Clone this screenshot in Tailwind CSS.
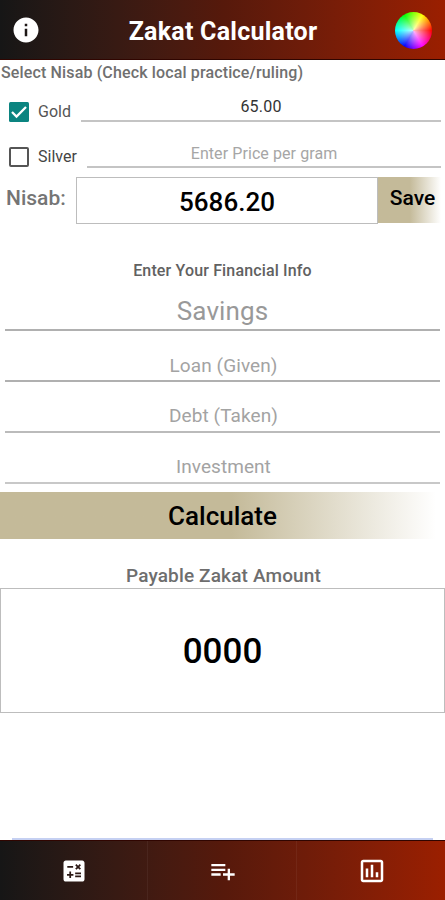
<!DOCTYPE html>
<html lang="en">

<head>
    <meta charset="UTF-8">
    <meta name="viewport" content="width=device-width, initial-scale=1.0">
    <title>Zakat Calculator</title>
    <script src="https://cdn.jsdelivr.net/npm/@tailwindcss/browser@4"></script>
</head>

<body class="bg-white font-[Roboto,sans-serif]">
    <div class="flex flex-col w-[445px] h-[900px] overflow-hidden">

        <!-- header -->
        <header class="flex items-center justify-between h-[60px] shrink-0 pl-[11px] pr-[13px] border-b border-[#300500] bg-linear-to-r from-[#161616] via-[#56190b] to-[#9b1f00]">
            <svg class="size-[30px]" viewBox="0 0 24 24" fill="white">
                <path d="M12 2C6.480 2 2 6.480 2 12s4.480 10 10 10 10-4.480 10-10S17.520 2 12 2zm1 15h-2v-6h2v6zm0-8h-2V7h2v2z" />
            </svg>
            <h1 class="pt-1 pl-2.5 text-white font-bold text-[25px] leading-8 tracking-[0.24px]">Zakat Calculator</h1>
            <div class="size-[37px] mt-0.5 rounded-full bg-[radial-gradient(circle,rgba(255,255,255,0.75)_0%,rgba(255,255,255,0)_70%),conic-gradient(from_90deg,#ff0000,#ff00ff,#0000ff,#00ffff,#00ff00,#ffff00,#ff0000)]"></div>
        </header>

        <main class="flex flex-col grow">
            <p class="h-[25px] pl-px pt-px text-base leading-6 tracking-[0.14px] font-medium text-[#707070]">Select Nisab (Check local practice/ruling)</p>

            <div class="flex h-[37px] pl-2 pr-1">
                <label class="flex items-center pt-4 gap-2 w-[73px] text-base text-[#555555]">
                    <svg class="size-[22px] shrink-0" viewBox="0 0 22 22">
                        <rect x="1" y="1" width="20" height="20" rx="1.500" fill="#0b8480" />
                        <path d="M4 11l4.500 4.500L18 6" fill="none" stroke="white" stroke-width="2.300" />
                    </svg>
                    Gold
                </label>
                <div class="grow border-b-2 border-[#c4c4c4] pt-2.5 text-center text-base leading-6 tracking-[0.2px] text-[#333333]">65.00</div>
            </div>

            <div class="flex h-[46px] pl-2 pr-1">
                <label class="flex items-center pt-6 gap-2 w-[79px] text-base text-[#444444]">
                    <svg class="size-[22px] shrink-0" viewBox="0 0 22 22">
                        <rect x="2" y="2" width="18" height="18" rx="1" fill="none" stroke="#555555" stroke-width="2" />
                    </svg>
                    Silver
                </label>
                <div class="grow border-b-2 border-[#c4c4c4] pt-5 text-center text-base leading-6 tracking-[0.08px] text-[#a6a6a6]">Enter Price per gram</div>
            </div>

            <div class="flex h-[57px] pt-[9px] pr-1">
                <span class="w-[76px] pl-1.5 pt-[5px] text-[21px] leading-8 font-medium text-[#757575]">Nisab:</span>
                <div class="w-[302px] h-[47px] border border-[#bdbdbd] text-center text-[26px] leading-[48px] font-medium text-black">5686.20</div>
                <button class="w-[63px] h-[46px] pl-1.5 pb-0.5 text-[21px] font-medium text-black bg-linear-to-r from-[#c4ba99] from-50% to-white">Save</button>
            </div>

            <p class="mt-[34px] h-6 text-center text-base leading-6 tracking-[0.15px] font-medium text-[#616161]">Enter Your Financial Info</p>

            <div class="mx-[5px]">
                <div class="h-[48px] border-b-2 border-[#b0b0b0] pt-3 text-center text-[26px] leading-8 tracking-[0.1px] text-[#999999]">Savings</div>
                <div class="h-[51px] border-b-2 border-[#b0b0b0] pt-[21px] pl-0.5 text-center text-[19px] leading-7 tracking-[0.1px] text-[#a3a3a3]">Loan (Given)</div>
                <div class="h-[51px] border-b-2 border-[#bbbbbb] pt-5 pl-0.5 text-center text-[19px] leading-7 tracking-[0.1px] text-[#a3a3a3]">Debt (Taken)</div>
                <div class="h-[51px] border-b-2 border-[#c8c8c8] pt-5 pl-0.5 text-center text-[19px] leading-7 tracking-[0.05px] text-[#a3a3a3]">Investment</div>
            </div>

            <button class="mt-2 h-[47px] pt-0.5 text-[26px] font-medium text-black bg-linear-to-r from-[#c4ba99] from-52% to-white to-98%">Calculate</button>

            <p class="mt-6 h-[25px] pl-0.5 text-center text-[19px] leading-[26px] tracking-[0.15px] font-medium text-[#6e6e6e]">Payable Zakat Amount</p>
            <div class="h-[125px] border border-[#bdbdbd] text-center text-[35px] leading-[126px] font-medium text-black">0000</div>
        </main>

        <!-- bottom tabs -->
        <div class="mx-3 h-0.5 shrink-0 bg-[#c5d0f2]"></div>
        <nav class="grid grid-cols-3 h-[60px] shrink-0 border-t border-[#300500] bg-linear-to-r from-[#161616] via-[#56190b] to-[#9b1f00]">
            <a class="flex items-center justify-center border-r border-white/5">
                <svg class="size-[28px]" viewBox="0 0 24 24" fill="white">
                    <path d="M19 3H5c-1.100 0-2 .9-2 2v14c0 1.100.9 2 2 2h14c1.100 0 2-.9 2-2V5c0-1.100-.9-2-2-2zm-5.970 4.060L14.090 6l1.410 1.410L16.910 6l1.060 1.060-1.410 1.410 1.410 1.410-1.060 1.060-1.410-1.400-1.410 1.410-1.060-1.060 1.410-1.410-1.410-1.420zM6.250 7.720h5v1.500h-5v-1.500zM11.500 16h-2v2H8v-2H6v-1.500h2v-2h1.500v2h2V16zm6.500 1.250h-5v-1.500h5v1.500zm0-2.500h-5v-1.500h5v1.500z" />
                </svg>
            </a>
            <a class="flex items-center justify-center pl-0.5 border-r border-white/5">
                <svg class="size-[28px]" viewBox="0 0 24 24" fill="white">
                    <path d="M14 10H2v2h12v-2zm0-4H2v2h12V6zm4 8v-4h-2v4h-4v2h4v4h2v-4h4v-2h-4zM2 16h8v-2H2v2z" />
                </svg>
            </a>
            <a class="flex items-center justify-center pl-0.5">
                <svg class="size-[30px]" viewBox="0 0 24 24" fill="white">
                    <path d="M9 17H7v-7h2v7zm4 0h-2V7h2v10zm4 0h-2v-4h2v4zm2 2H5V5h14v14zm0-16H5c-1.100 0-2 .9-2 2v14c0 1.100.9 2 2 2h14c1.100 0 2-.9 2-2V5c0-1.100-.9-2-2-2z" />
                </svg>
            </a>
        </nav>
    </div>
</body>

</html>
